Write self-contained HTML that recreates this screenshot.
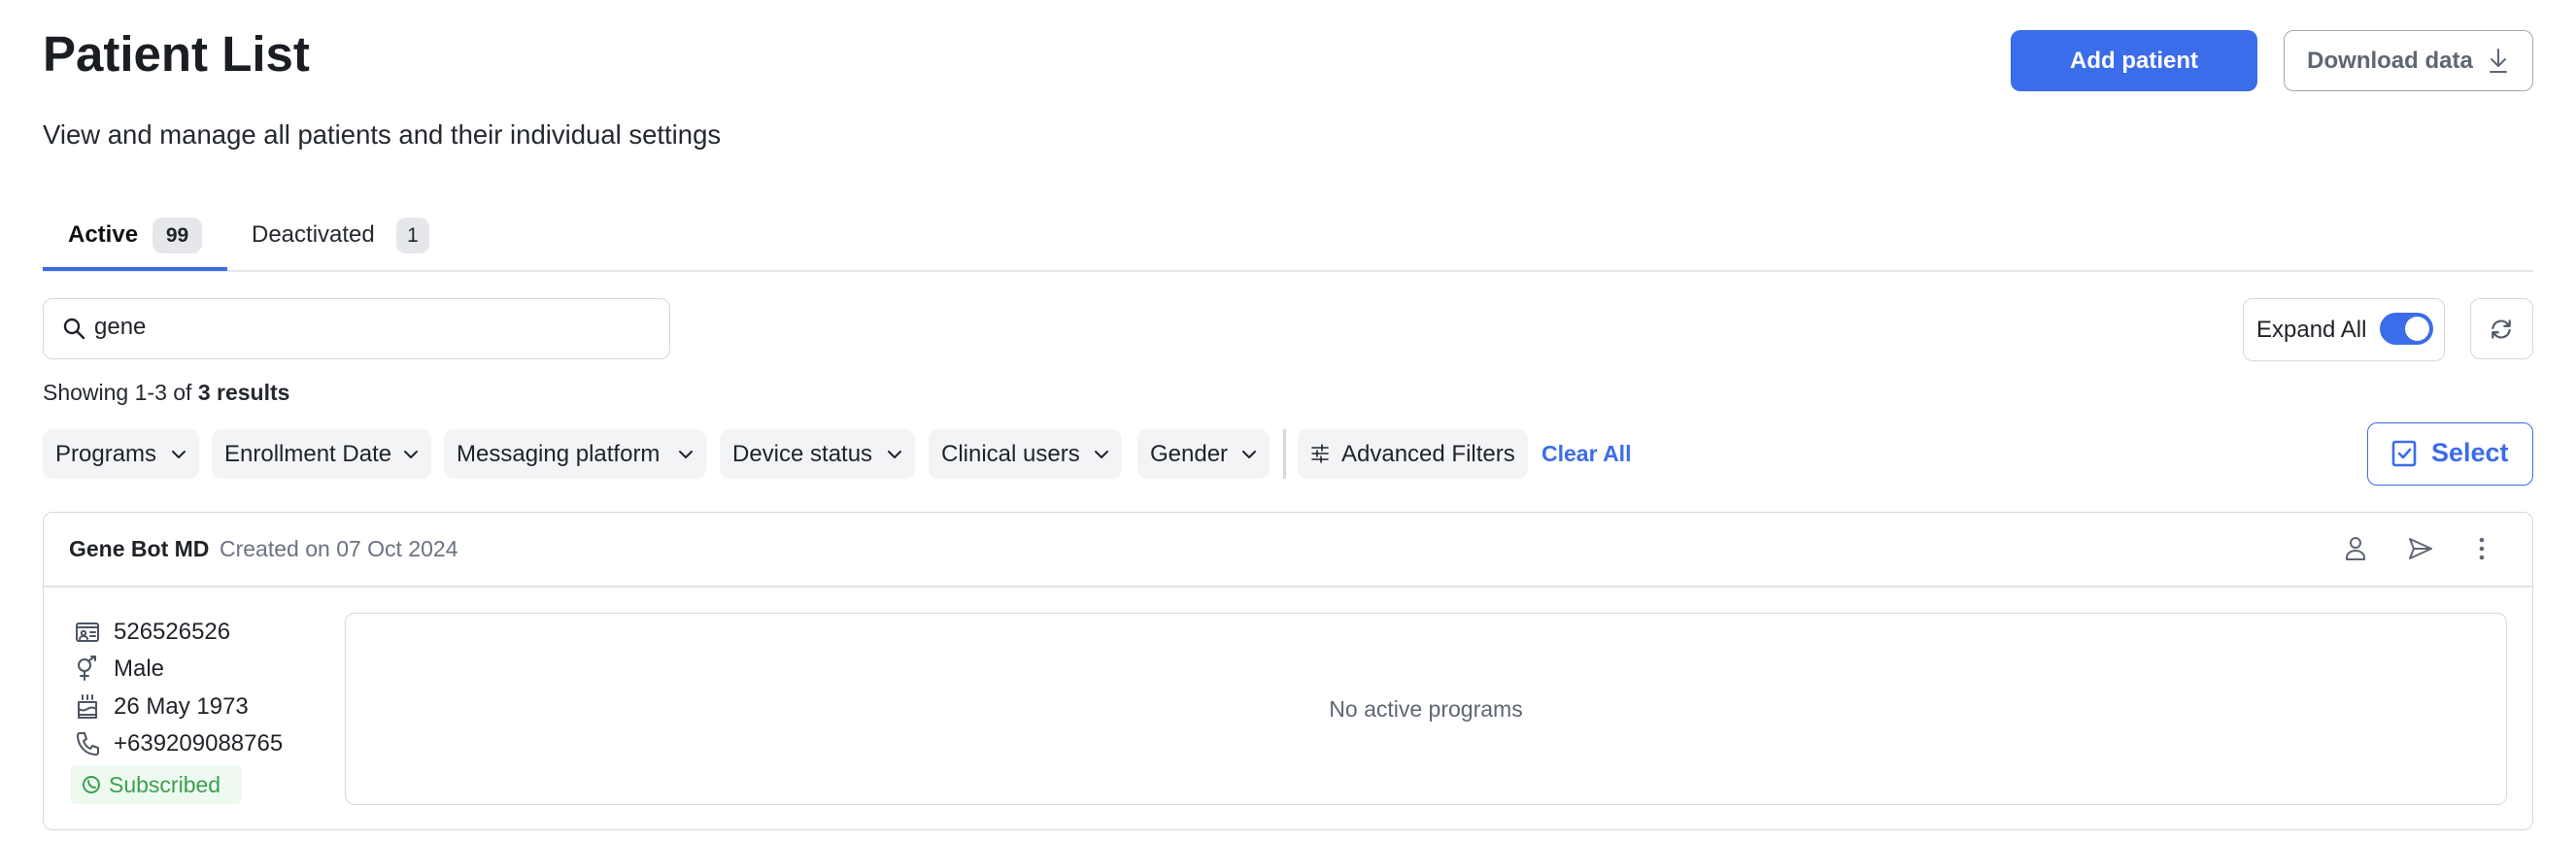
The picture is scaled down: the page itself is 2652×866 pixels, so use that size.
<!DOCTYPE html>
<html><head><meta charset="utf-8">
<style>
*{box-sizing:border-box;margin:0;padding:0}
body{width:2652px;height:866px;background:#fff;font-family:"Liberation Sans",sans-serif;color:#1f2328;position:relative;overflow:hidden}
.a{position:absolute}
.t{white-space:nowrap}
.chip{position:absolute;top:442px;height:51px;background:#f3f4f6;border-radius:10px;font-size:24px;display:flex;align-items:center;padding-left:13px;color:#1f2328}
.chip svg{position:absolute;right:12px;top:17px}
.ico{stroke:#4b5563;fill:none;stroke-width:2;stroke-linecap:round;stroke-linejoin:round}
.row{position:absolute;left:77px;font-size:24px;display:flex;align-items:center;height:30px}
.row svg{margin-right:14px}
</style></head><body>
<div class="a t" style="left:44px;top:26px;font-size:51px;font-weight:bold;color:#1a1d21">Patient List</div>
<div class="a t" style="left:44px;top:123px;font-size:27.5px;color:#24292f">View and manage all patients and their individual settings</div>

<div class="a" style="left:2070px;top:31px;width:254px;height:63px;background:#3b6cea;border-radius:10px;color:#fff;font-size:24px;font-weight:bold;display:flex;align-items:center;justify-content:center">Add patient</div>
<div class="a" style="left:2351px;top:31px;width:257px;height:63px;border:1.5px solid #a3a8b0;border-radius:10px;color:#5f6673;font-size:24px;font-weight:bold;display:flex;align-items:center;justify-content:center">Download data
<svg width="24" height="28" viewBox="0 0 24 28" style="margin-left:14px" class="ico"><path d="M12 2v17M5 12l7 7 7-7M4 25h16" stroke="#5f6673"/></svg></div>

<div class="a t" style="left:70px;top:228px;font-size:24px;font-weight:bold;color:#111">Active</div>
<div class="a" style="left:157px;top:224px;width:51px;height:37px;background:#e5e7eb;border-radius:10px;font-size:21px;font-weight:bold;display:flex;align-items:center;justify-content:center">99</div>
<div class="a t" style="left:259px;top:228px;font-size:24px;color:#24292f">Deactivated</div>
<div class="a" style="left:408px;top:224px;width:34px;height:37px;background:#e5e7eb;border-radius:10px;font-size:21px;display:flex;align-items:center;justify-content:center">1</div>
<div class="a" style="left:44px;top:278px;width:2564px;height:2px;background:#e5e7eb"></div>
<div class="a" style="left:44px;top:275px;width:190px;height:4px;background:#3b6cea"></div>

<div class="a" style="left:44px;top:307px;width:646px;height:63px;border:1.5px solid #d6d9de;border-radius:10px"></div>
<svg class="a ico" style="left:64px;top:326px" width="26" height="26" viewBox="0 0 26 26"><circle cx="10" cy="10" r="7" stroke="#1f2328" stroke-width="2.4"/><path d="M15 15l7 7" stroke="#1f2328" stroke-width="2.4"/></svg>
<div class="a t" style="left:97px;top:323px;font-size:24px">gene</div>

<div class="a t" style="left:44px;top:391px;font-size:23px;color:#24292f">Showing 1-3 of <b>3 results</b></div>

<div class="a" style="left:2309px;top:307px;width:208px;height:65px;border:1.5px solid #d6d9de;border-radius:10px"></div>
<div class="a t" style="left:2323px;top:326px;font-size:24px">Expand All</div>
<div class="a" style="left:2450px;top:322px;width:55px;height:33px;background:#3b6cea;border-radius:17px"><div class="a" style="right:4px;top:4px;width:25px;height:25px;background:#fff;border-radius:50%"></div></div>
<div class="a" style="left:2543px;top:307px;width:65px;height:63px;border:1.5px solid #d6d9de;border-radius:10px"></div>
<svg class="a ico" style="left:2562px;top:326px" width="26" height="26" viewBox="0 0 24 24"><path d="M4 11a8 8 0 0 1 14-4l2 2M20 13a8 8 0 0 1-14 4l-2-2M20 4v5h-5M4 20v-5h5" stroke="#4b5563"/></svg>

<div class="chip" style="left:44px;width:161px">Programs<svg width="18" height="18" viewBox="0 0 18 18" class="ico"><path d="M3 6l6 6 6-6" stroke="#1f2328"/></svg></div>
<div class="chip" style="left:218px;width:226px">Enrollment Date<svg width="18" height="18" viewBox="0 0 18 18" class="ico"><path d="M3 6l6 6 6-6" stroke="#1f2328"/></svg></div>
<div class="chip" style="left:457px;width:270px">Messaging platform<svg width="18" height="18" viewBox="0 0 18 18" class="ico"><path d="M3 6l6 6 6-6" stroke="#1f2328"/></svg></div>
<div class="chip" style="left:741px;width:201px">Device status<svg width="18" height="18" viewBox="0 0 18 18" class="ico"><path d="M3 6l6 6 6-6" stroke="#1f2328"/></svg></div>
<div class="chip" style="left:956px;width:199px">Clinical users<svg width="18" height="18" viewBox="0 0 18 18" class="ico"><path d="M3 6l6 6 6-6" stroke="#1f2328"/></svg></div>
<div class="chip" style="left:1171px;width:136px">Gender<svg width="18" height="18" viewBox="0 0 18 18" class="ico"><path d="M3 6l6 6 6-6" stroke="#1f2328"/></svg></div>
<div class="a" style="left:1321px;top:442px;width:3px;height:51px;background:#d6d9de"></div>
<div class="chip" style="left:1336px;width:237px;padding-left:45px">Advanced Filters</div>
<svg class="a ico" style="left:1348px;top:456px" width="22" height="22" viewBox="0 0 22 22"><path d="M3 5h16M3 11h16M3 17h16" stroke="#1f2328" stroke-width="1.6"/><path d="M13 2v6M8 8v6M12 14v6" stroke="#1f2328" stroke-width="1.6"/></svg>
<div class="a t" style="left:1587px;top:454px;font-size:23px;font-weight:bold;color:#3b6cea">Clear All</div>

<div class="a" style="left:2437px;top:435px;width:171px;height:65px;border:1.5px solid #3b6cea;border-radius:10px"></div>
<svg class="a" style="left:2461px;top:452px" width="28" height="30" viewBox="0 0 28 30" fill="none" stroke="#3b6cea" stroke-width="2.6" stroke-linecap="round" stroke-linejoin="round"><rect x="3" y="3" width="22" height="24" rx="2"/><path d="M9 15l4 4 7-8"/></svg>
<div class="a t" style="left:2503px;top:451px;font-size:27px;font-weight:bold;color:#3b6cea">Select</div>

<div class="a" style="left:44px;top:527px;width:2564px;height:328px;border:1.5px solid #d6d9de;border-radius:10px"></div>
<div class="a" style="left:45px;top:603px;width:2562px;height:2px;background:#e1e3e7"></div>
<div class="a t" style="left:71px;top:552px;font-size:23px;font-weight:bold;color:#1f2328">Gene Bot MD</div>
<div class="a t" style="left:226px;top:552px;font-size:23px;color:#6b7280">Created on 07 Oct 2024</div>
<svg class="a ico" style="left:2412px;top:551px" width="26" height="28" viewBox="0 0 26 28"><circle cx="13" cy="8" r="5" stroke="#5f6673"/><path d="M4 25v-2a9 7 0 0 1 18 0v2z" stroke="#5f6673"/></svg>
<svg class="a ico" style="left:2478px;top:552px" width="28" height="26" viewBox="0 0 28 26"><path d="M3 3l22 10L3 23l4-10z M7 13h18" stroke="#5f6673"/></svg>
<svg class="a" style="left:2548px;top:551px" width="14" height="28" viewBox="0 0 14 28" fill="#5f6673"><circle cx="7" cy="5" r="2.3"/><circle cx="7" cy="14" r="2.3"/><circle cx="7" cy="23" r="2.3"/></svg>

<div class="row" style="top:636px"><svg width="26" height="24" viewBox="0 0 26 24" class="ico"><rect x="2" y="3" width="22" height="18" rx="2" stroke="#4b5563"/><path d="M2 7h22" stroke="#4b5563"/><circle cx="9" cy="13" r="2.2" stroke="#4b5563"/><path d="M5 19a4 3 0 0 1 8 0M16 12h5M16 16h5" stroke="#4b5563"/></svg>526526526</div>
<div class="row" style="top:674px"><svg width="26" height="30" viewBox="0 0 26 30" class="ico"><circle cx="10" cy="11" r="6" stroke="#4b5563"/><path d="M10 17v9M6 22h8M15 6l6-4M17 2h4v4" stroke="#4b5563"/></svg>Male</div>
<div class="row" style="top:713px"><svg width="26" height="30" viewBox="0 0 26 30" class="ico"><path d="M8 3v4M13 3v4M18 3v4M4 10h18v16H4zM4 17c3 2 6 2 9 0s6-2 9 0M4 23h18" stroke="#4b5563"/></svg>26 May 1973</div>
<div class="row" style="top:751px"><svg width="26" height="30" viewBox="0 0 26 30" class="ico"><path d="M5 4h5l2 6-3 2a13 13 0 0 0 7 8l2-3 6 2v5a2 2 0 0 1-2 2C11 26 3 17 3 6a2 2 0 0 1 2-2z" stroke="#4b5563"/></svg>+639209088765</div>
<div class="a" style="left:72px;top:788px;width:177px;height:40px;background:#eefaf0;border-radius:6px"></div>
<svg class="a ico" style="left:83px;top:797px" width="22" height="22" viewBox="0 0 22 22"><circle cx="11" cy="11" r="8" stroke="#3aa04f"/><path d="M8 7c0 4 3 7 7 7" stroke="#3aa04f"/></svg>
<div class="a t" style="left:112px;top:795px;font-size:23px;color:#3aa04f">Subscribed</div>

<div class="a" style="left:355px;top:631px;width:2226px;height:198px;border:1.5px solid #d6d9de;border-radius:10px;display:flex;align-items:center;justify-content:center;font-size:23px;color:#5f6673">No active programs</div>
</body></html>
